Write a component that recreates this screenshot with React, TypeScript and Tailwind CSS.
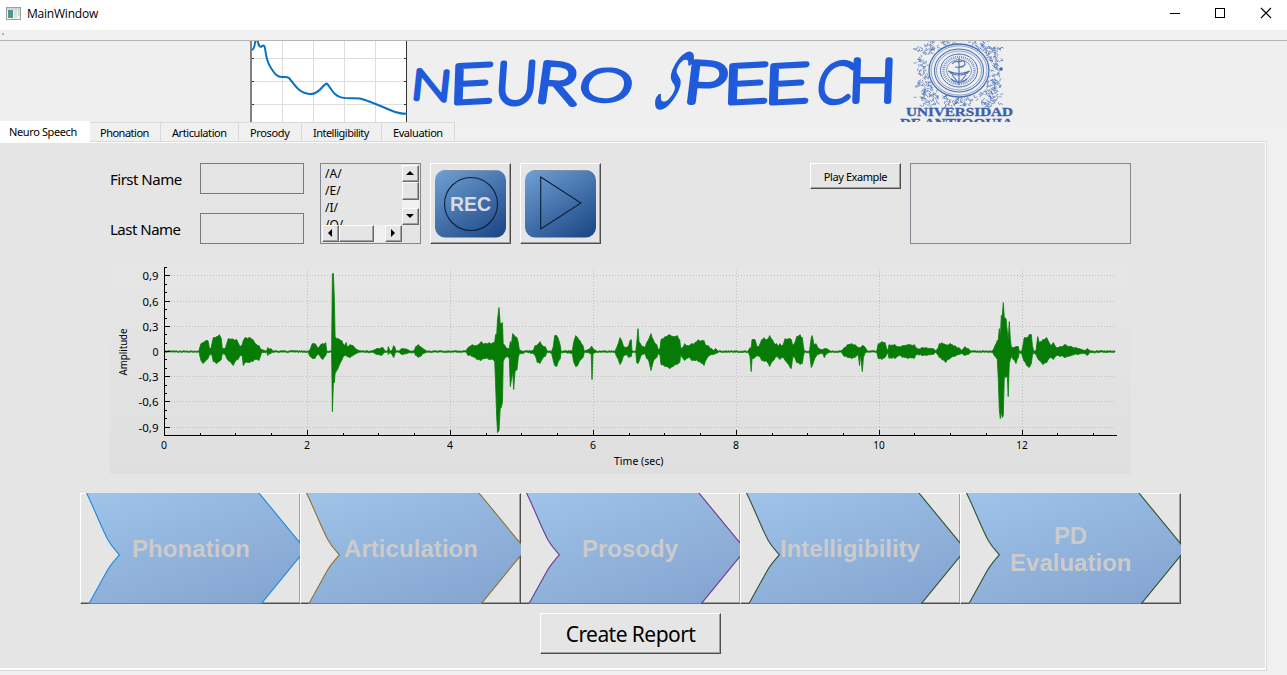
import React from "react";

const UI = "font-['Noto_Sans',sans-serif]";

/* [x, above, below] envelope of the recording, in pixels around the zero line */
const ENVELOPE: number[][] = [
  [55, 0.5, 0.5], [89, 0.5, 0.5], [90, 5, 5], [91, 8, 9], [93, 9, 12], [96, 11, 9], [98, 11, 7], [99.5, 3, 3], [101, 3, 3], [102, 8, 4], [103.3, 14, 10], [106.7, 15, 12], [109.3, 17, 10], [111.3, 13, 8], [112.3, 3, 2], [115.3, 3, 3], [116.7, 8, 7], [118.3, 13, 9], [123.3, 12.5, 14], [126.7, 12, 8], [128, 9, 8], [130, 5, 4], [132.3, 7, 5], [133.3, 11, 14], [135, 14, 11], [140, 14, 11], [143, 12, 10], [146.7, 7, 8], [149, 6, 9], [151.7, 2, 1], [156.7, 0.6, 0.6], [157.7, 4, 4], [161, 3, 1.5], [163, 0.6, 0.6],
  [198.3, 0.6, 0.6], [200, 2, 5], [202.3, 8, 7], [205, 8, 7], [208.3, 4, 3], [210.7, 7, 6], [212.7, 8, 8], [215.7, 9, 4], [216.7, 0.6, 0.6], [221.6, 0.6, 0.6], [222.4, 78, 60], [223.4, 78, 31], [224.4, 51, 31], [225.1, 15, 22], [228, 13, 17], [231.7, 11, 9], [234.3, 6, 4], [236.3, 9, 4], [237, 5, 5], [240, 7, 6], [243, 6, 4], [247, 2, 1.5], [250, 0.6, 0.6],
  [263, 0.8, 0.8], [266.7, 3, 3], [271.7, 4, 4], [273, 4, 2], [275, 0.6, 0.6], [277.7, 0.6, 0.6], [278.3, 5, 3], [280, 0.6, 0.6], [282, 1, 3], [283.7, 6, 6], [285, 4, 2], [286, 0.6, 0.6], [289, 0.6, 0.6], [291.7, 3, 3], [296.7, 2.5, 2], [300, 0.8, 0.8], [304.3, 1, 1], [305.7, 5, 4], [308.3, 7, 6], [310.7, 5, 5], [313, 3, 2], [316.7, 0.6, 0.6],
  [356, 0.6, 0.6], [358, 4, 4], [362, 7, 5], [366.7, 6, 8], [371, 10, 9], [375, 8, 7], [379, 9, 8], [383, 9, 8], [384.7, 9, 10], [385.5, 17, 30], [386.7, 17, 65], [387.5, 32, 81], [389, 44, 79], [390.2, 28, 57], [391.3, 28, 56], [392.5, 29, 50], [393.2, 8, 10], [395, 6, 6], [397.7, 3, 5], [399.3, 3, 7], [400.3, 10, 35], [401.5, 8, 28], [402.7, 18, 20], [403.7, 17, 38], [405, 15, 20], [407, 14, 18], [408.3, 9, 6], [409.3, 2, 2], [411.7, 0.6, 2], [416, 0.6, 0.6],
  [423.3, 1, 2], [425, 6, 4], [427.3, 7, 11], [430, 10, 12], [432.7, 6, 7], [435.3, 5, 5], [437, 0.6, 0.6], [441.7, 0.6, 1.5], [443.3, 5, 9], [444.7, 16, 14], [446.7, 16, 15], [448.3, 13, 10], [450.3, 6, 7], [451, 0.6, 0.6], [462.3, 0.6, 2], [463.6, 9, 10], [465.7, 16, 15], [467.7, 14, 14], [470, 11, 9], [473, 6, 6], [474.3, 0.6, 0.6], [478.3, 2, 1], [480, 3, 2], [481.2, 5, 2], [482, 5, 28], [483, 3, 2], [486, 0.6, 0.6],
  [505, 0.6, 0.6], [506.7, 4, 5], [508.3, 8, 8], [510, 14, 13], [511.7, 11, 10], [513.3, 6, 5], [516.7, 4, 3], [518.7, 6, 6], [520, 11, 5], [521.3, 12, 5], [522, 0.6, 0.6], [525.8, 0.6, 0.6], [526.7, 8, 11], [528, 23, 12], [529, 10, 10], [531, 7, 4], [535, 4, 2], [536.7, 9, 7], [539, 13, 10], [541, 18, 19], [543.3, 12, 10], [546.7, 7, 6], [548.3, 2, 2], [550, 3, 4], [551, 12, 13], [555, 15, 15], [559.3, 17, 17], [563.3, 15, 15], [567.3, 16, 13], [569.7, 12, 11], [570.7, 3, 3], [572.3, 4, 6], [574.7, 8, 9], [578.3, 6, 6], [581.7, 8, 9], [585, 9, 9], [588.3, 12, 10], [591.7, 11, 12], [594, 11, 14], [595.3, 7, 10], [598.3, 6, 5], [601.7, 3, 3], [603.3, 1, 3], [605.7, 3, 2], [608.3, 0.6, 0.6],
  [638.3, 0.6, 0.6], [640, 4, 5], [641.2, 3, 20], [642, 12, 8], [643, 12, 7], [645, 12, 6], [647, 5, 4], [649.3, 6, 5], [651.7, 12, 9], [654, 14, 10], [656.7, 12, 10], [659.7, 16, 15], [662.3, 12, 10], [664.3, 8, 8], [666.7, 8, 5], [668.3, 5, 6], [670, 8, 8], [672.7, 6, 6], [675, 13, 9], [680, 13, 16], [681.3, 12, 17], [682.7, 6, 6], [684.3, 8, 5], [686.7, 15, 11], [690, 17, 13], [692.3, 14, 12], [693.3, 6, 5], [694.3, 0.6, 0.6], [699.5, 0.6, 1], [701.3, 14, 16], [702.3, 16, 14], [703.7, 8, 10], [706, 8, 5], [707.7, 4, 3], [710.7, 2, 2], [713, 2, 2], [714.3, 3, 6], [716.7, 3, 2], [720, 0.6, 0.6],
  [731.3, 0.6, 0.6], [734.3, 4, 5], [737.7, 7, 6], [741.7, 8, 7], [745, 7, 6], [748.3, 4, 3], [749.5, 4, 14], [750.5, 4, 3], [752.3, 6, 20], [753.4, 6, 6], [755.3, 4, 1], [757.3, 0.6, 0.6], [766.7, 0.6, 0.6], [768.3, 8, 7], [771.7, 10, 8], [775, 9, 6], [776.7, 3, 3], [778, 1, 1], [779, 7, 7], [785, 7, 7], [789, 5, 4], [792.7, 6, 6], [798.3, 7, 7], [804.3, 7, 7], [806.7, 3, 3], [811.7, 4, 4], [816.7, 4, 4], [823.3, 3, 3], [825.7, 0.6, 0.6], [828.3, 4, 4], [829.3, 8, 6], [831.7, 9, 8], [835.7, 7, 11], [840, 8, 7], [845, 6, 5], [849, 4, 3], [851.7, 1, 2], [855, 5, 4], [858.3, 3, 3], [860.7, 0.6, 0.6],
  [882.3, 0.6, 0.6], [885, 6, 5], [887.3, 11, 8], [888.3, 12, 28], [889.3, 23, 58], [890.3, 14, 67], [891.3, 36, 60], [892.3, 36, 66], [893.3, 49, 64], [894.3, 34, 25], [896, 33, 26], [897.3, 20, 24], [898.2, 12, 45], [899.3, 30, 12], [900.3, 13, 8], [901.4, 4, 5], [903.3, 4, 8], [906, 5, 12], [908.3, 5, 6], [909.3, 0.6, 0.6], [911.7, 0.6, 2], [912.7, 5, 6], [914.3, 14, 10], [916.7, 14, 14], [919.3, 17, 16], [921.3, 17, 12], [922.4, 6, 4], [923.7, 0.6, 0.6], [926, 1, 3], [927.7, 15, 7], [929.3, 9, 9], [932.7, 12, 13], [936.7, 14, 11], [940.7, 6, 6], [943.3, 9, 8], [946.7, 4, 4], [950, 5, 5], [955, 7, 6], [961.7, 5, 4], [966.7, 4, 3], [971.7, 2, 2], [975, 1, 2], [977.3, 3, 4], [980, 0.8, 0.8], [1006, 0.6, 0.6],
];

function rand(n: number) {
  const v = Math.sin(n * 12.9898) * 43758.5453;
  return v - Math.floor(v);
}

const WAVE = (() => {
  const zero = 84.6;
  const up: string[] = [];
  const down: string[] = [];
  for (let i = 0; i < ENVELOPE.length - 1; i++) {
    const [x0, u0, d0] = ENVELOPE[i];
    const [x1, u1, d1] = ENVELOPE[i + 1];
    const steps = Math.max(1, Math.floor((x1 - x0) / 1.1));
    for (let s = 0; s < steps; s++) {
      const t = s / steps;
      const x = x0 + (x1 - x0) * t;
      const u = u0 + (u1 - u0) * t;
      const d = d0 + (d1 - d0) * t;
      const ju = u > 3 && s > 0 ? -rand(x) * 1.2 : u < 1 ? (rand(x) - 0.5) * 0.9 : 0;
      const jd = d > 3 && s > 0 ? -rand(x + 7) * 1.2 : u < 1 ? -ju : 0;
      up.push(`${x.toFixed(2)},${(zero - u - ju).toFixed(2)}`);
      down.unshift(`${x.toFixed(2)},${(zero + d + jd).toFixed(2)}`);
    }
  }
  return up.concat(down).join(" ");
})();

const Y_TICKS: [string, number][] = [["0,9", 8.5], ["0,6", 34.5], ["0,3", 59.5], ["0", 84.5], ["-0,3", 109.5], ["-0,6", 134.5], ["-0,9", 160.5]];
const Y_WIDTH = [16, 16, 16, 6, 20, 20, 20];
const X_TICKS: [string, number][] = [["0", 54.5], ["2", 197.5], ["4", 340.5], ["6", 483.5], ["8", 626.5], ["10", 769.5], ["12", 912.5]];
const X_MINOR = [90.5, 125.5, 161.5, 233.5, 268.5, 304.5, 376.5, 411.5, 447.5, 519.5, 554.5, 590.5, 662.5, 697.5, 733.5, 804.5, 840.5, 876.5, 947.5, 983.5];
const Y_MINOR = [0.5, 17.5, 25.5, 42.5, 51.5, 67.5, 76.5, 92.5, 101.5, 118.5, 126.5, 143.5, 151.5];

function WaveChart() {
  return (
    <svg width="1021" height="207" viewBox="0 0 1021 207" className={`block bg-linear-to-b from-[#e6e6e6] to-[#dfdfdf] ${UI}`}>
      <g stroke="#c0c0c0" strokeDasharray="1 2" shapeRendering="crispEdges">
        {Y_TICKS.map(([l, y]) => l !== "0" && <path key={l} d={`M55 ${y}H1006`} />)}
        {X_TICKS.slice(1).map(([l, x]) => <path key={l} d={`M${x} 3V168`} />)}
      </g>
      <polygon points={WAVE} fill="#067c06" stroke="#067c06" strokeWidth="0.8" />
      <g stroke="#000" shapeRendering="crispEdges">
        <path d="M54.5 0V169M54 168.5H1007" />
        {Y_TICKS.map(([l, y]) => <path key={l} d={`M55 ${y}h5`} />)}
        {Y_MINOR.map((y) => <path key={y} d={`M55 ${y}h2`} />)}
        {X_TICKS.slice(1).map(([l, x]) => <path key={l} d={`M${x} 168v-5`} />)}
        {X_MINOR.map((x) => <path key={x} d={`M${x} 168v-2`} />)}
      </g>
      <g fontSize="11" fill="#000">
        {Y_TICKS.map(([l, y], i) => (
          <text key={l} x={48.5 - Y_WIDTH[i]} y={y + 4} textLength={Y_WIDTH[i]} lengthAdjust="spacingAndGlyphs">{l}</text>
        ))}
        {X_TICKS.map(([l, x]) => (
          <text key={l} x={x - 0.5} y="182" textAnchor="middle" textLength={l.length > 1 ? 11.5 : 6} lengthAdjust="spacingAndGlyphs">{l}</text>
        ))}
        <text x="504" y="198" textLength="49.500" lengthAdjust="spacingAndGlyphs">Time (sec)</text>
        <text transform="translate(16.5 108.5) rotate(-90)" textLength="47" lengthAdjust="spacingAndGlyphs">Amplitude</text>
      </g>
    </svg>
  );
}

/* letter, left, top, right, bottom, tilt, slant */
const WORDMARK: [string, number, number, number, number, number, number][] = [
  ["N", 414, 67, 450, 103, 3, -3], ["E", 455, 61, 493, 105, -3, -5], ["U", 498, 59, 535, 106, -2, -6], ["R", 541, 60, 582, 106, 5, -3], ["O", 581, 66, 632, 104, 6, -12],
  ["S", 665, 49, 686, 111, 14, -14], ["P", 690, 59, 729, 106, 3, -4], ["E", 729, 61, 768, 105, -3, -5], ["E", 770, 61, 809, 105, -3, -5], ["C", 818, 59, 853, 105, 0, -12], ["H", 853, 56, 893, 104, 0, -2],
];
const ADVANCE: Record<string, [number, number]> = { N: [0.1, 0.56], E: [0.11, 0.43], U: [0.09, 0.54], R: [0.11, 0.5], O: [0.05, 0.68], S: [0.05, 0.45], P: [0.11, 0.44], C: [0.05, 0.57], H: [0.11, 0.54] };

function Wordmark() {
  return (
    <svg width="493" height="81" viewBox="407 41 493 81" className="block shrink-0 font-['Lato',sans-serif] font-thin">
      {WORDMARK.map(([ch, l, t, r, b, tilt, slant], i) => {
        const [lead, ink] = ADVANCE[ch];
        const pen = 6;
        const sx = (r - l - pen) / (ink * 50);
        const sy = (b - t - pen) / 36;
        return (
          <text
            key={i}
            fontSize="50"
            fill="#1f5adb"
            stroke="#1f5adb"
            strokeWidth="5.200"
            strokeLinejoin="round"
            strokeLinecap="round"
            transform={`translate(${(l + r) / 2} ${(t + b) / 2}) rotate(${tilt}) skewX(${slant}) translate(${pen / 2 - (r - l) / 2 - lead * 50 * sx} ${(b - t) / 2 - pen / 2}) scale(${sx} ${sy})`}
          >
            {ch}
          </text>
        );
      })}
    </svg>
  );
}

function Spectrum() {
  return (
    <svg width="157" height="81" viewBox="0 0 157 81" className="block shrink-0 bg-white">
      <path d="M32.5 0V81M63.5 0V81M94.5 0V81M125.5 0V81M0 17.5H157M0 40.5H157M0 63.5H157" stroke="#dedede" fill="none" />
      <path d="M1 0V81" stroke="#808080" strokeWidth="2" />
      <path d="M156.5 0V81" stroke="#333" />
      <path d="M2 17.5h2M2 40.5h2M2 63.5h2M154 17.5h2M154 40.5h2M154 63.5h2" stroke="#333" />
      <path d="M2 9C4 8 4.500 6 5 2L6 -2L7.500 -1C8.500 4 9 6 11 5.800C13 5 14 3 15 7C16 13 16 20 21 27C25 33 27 36 32 36C35 36 37 35.500 39 37C45 44 49 53 61 53C70 53 72 44 76.500 42.500C80 44 82 56 95 57C102 57.300 106 57 110 57.500C122 61 128 64 140 69C146 71.500 150 73 157 72.800" fill="none" stroke="#0a72bd" strokeWidth="2" />
    </svg>
  );
}

const FOLIAGE = (() => {
  const out: string[] = [];
  for (let i = 0; i < 1100; i++) {
    const x = 16 + rand(i + 1) * 86;
    const y = -1 + rand(i + 2001) * 66;
    const dx = (x - 59) / 32;
    const dy = (y - 29.5) / 28.5;
    if (dx * dx + dy * dy < 1) continue;
    if (y < 4 && (x < 28 || x > 88)) continue;
    if (y > 58 && (Math.abs(x - 41) < 4 || Math.abs(x - 77) < 4)) continue;
    const edge = 3 + 3 * Math.sin(y * 0.55);
    if (x < 15 + edge || x > 103 - edge) continue;
    const d = rand(i + 4001) * 6.28;
    const c = Math.cos(d) * 2.2;
    const s = Math.sin(d) * 2.2;
    out.push(`M${x.toFixed(1)} ${y.toFixed(1)}q${c.toFixed(1)} ${s.toFixed(1)} ${(c - s).toFixed(1)} ${(s + c).toFixed(1)}`);
  }
  return out.join("");
})();

function Crest() {
  return (
    <svg width="120" height="81" viewBox="0 0 120 81" className="block shrink-0 font-['Liberation_Serif',serif] font-bold">
      <g fill="none" stroke="#4a70b8">
        <path d={FOLIAGE} strokeWidth="0.8" opacity="0.85" />
        <ellipse cx="59" cy="29.500" rx="30" ry="26.500" fill="#efefef" strokeWidth="1.300" />
        <ellipse cx="59" cy="29.500" rx="28" ry="24.700" strokeWidth="0.600" />
        <ellipse cx="59" cy="29.500" rx="24.500" ry="21.500" strokeWidth="1.100" />
        <ellipse cx="59" cy="29.500" rx="22.500" ry="19.500" strokeWidth="0.600" />
        <ellipse cx="59" cy="29.500" rx="18.500" ry="16.500" strokeWidth="1" />
        <ellipse cx="59" cy="29.500" rx="15.500" ry="13.500" strokeWidth="2.500" strokeDasharray="1 1" opacity="0.7" />
        <ellipse cx="59" cy="29.500" rx="12.500" ry="11" strokeWidth="0.700" />
        <path d="M59 17V44M52 23q3 -4 7 -2q6 -3 6 2q-1 4 -10 3M48 30q11 5 22 0M49 30q2 4 10 4t10 -4M52 34l5 6M66 34l-5 6M51 38q4 4 8 3q4 1 8 -3" strokeWidth="1.100" />
      </g>
      <circle cx="101" cy="28" r="1.800" fill="#3d63ad" />
      <g fill="#3a60aa" stroke="#3a60aa" strokeWidth="0.300" fontSize="11.500">
        <text x="6" y="75" textLength="107" lengthAdjust="spacingAndGlyphs">UNIVERSIDAD</text>
        <text x="0" y="86" textLength="113" lengthAdjust="spacingAndGlyphs">DE ANTIOQUIA</text>
      </g>
    </svg>
  );
}

const RAISED = "border border-t-white border-l-white border-r-[#4d4d4d] border-b-[#4d4d4d] shadow-[inset_-1px_-1px_0_#a0a0a0] bg-[#e5e5e5]";
const KNOB = "flex items-center justify-center shrink-0 border border-t-white border-l-white border-r-[#696969] border-b-[#696969] shadow-[inset_-1px_-1px_0_#a0a0a0] bg-[#e5e5e5] pr-[2px] pb-px";

type Arrow = { lines: [string, number, number, number][]; stroke: string; top?: boolean };
const ARROWS: Arrow[] = [
  { lines: [["Phonation", 52, 118, 64]], stroke: "#1c8bdc" },
  { lines: [["Articulation", 44, 134, 64]], stroke: "#8a7434", top: true },
  { lines: [["Prosody", 62, 96, 64]], stroke: "#6b3a92" },
  { lines: [["Intelligibility", 40, 140, 64]], stroke: "#2f5133" },
  { lines: [["PD", 94, 33, 51], ["Evaluation", 50, 121.5, 78]], stroke: "#2f5133", top: true },
];

function ArrowButton({ lines, stroke, top }: Arrow) {
  return (
    <button className={`-mr-px h-[111px] w-[221px] shrink-0 ${RAISED} ${top ? "relative z-10" : ""}`}>
      <svg width="221" height="111" viewBox="0 0 221 111" className="-mt-px -ml-px block font-['Liberation_Sans',sans-serif] font-bold">
        <defs>
          <linearGradient id="arrowFill" x1="0.1" y1="0" x2="0.75" y2="1">
            <stop offset="0" stopColor="#9fc3e9" />
            <stop offset="1" stopColor="#84a5d0" />
          </linearGradient>
        </defs>
        <path d="M4 -5C13 12 20 32 28 47C32 54 36 58 39.300 61.800C35 67 31 71 27 78L6 116H177L225.500 56.500L174 -6Z" fill="url(#arrowFill)" stroke={stroke} strokeWidth="1.100" />
        <path d="M9 110.500H181" stroke="#6684aa" />
        {lines.map(([text, x, width, y]) => (
          <text key={text} x={x} y={y} fontSize="24" fill="#cbcbcb" textLength={width} lengthAdjust="spacing">{text}</text>
        ))}
      </svg>
    </button>
  );
}

function MediaButton({ children }: { children: React.ReactNode }) {
  return (
    <button className={`h-[81px] w-[81px] ${RAISED}`}>
      <svg width="79" height="79" viewBox="1 1 79 79" className="block font-['Liberation_Sans',sans-serif] font-bold">
        <defs>
          <linearGradient id="mediaFill" x1="0.1" y1="0" x2="0.8" y2="1">
            <stop offset="0" stopColor="#6d9dd1" />
            <stop offset="1" stopColor="#204b89" />
          </linearGradient>
        </defs>
        <rect x="5" y="7" width="71" height="67.500" rx="10" fill="url(#mediaFill)" />
        <path d="M13 7.500H68" stroke="#8593a5" />
        {children}
      </svg>
    </button>
  );
}

const TABS: [string, string, string][] = [
  ["Phonation", "w-[71px] pl-[10px]", "tracking-[-0.5px]"],
  ["Articulation", "w-[78px] pl-[11px]", "tracking-[-0.42px]"],
  ["Prosody", "w-[63px] pl-[11px]", "tracking-[-0.35px]"],
  ["Intelligibility", "w-[80px] pl-[11px]", "tracking-[-0.52px]"],
  ["Evaluation", "w-[73px] pl-[11px]", "tracking-[-0.42px]"],
];

export default function App() {
  return (
    <div className={`flex h-[675px] w-[1287px] flex-col overflow-hidden bg-[#f0f0f0] whitespace-nowrap text-black ${UI}`}>
      <header className="flex h-[30px] shrink-0 items-center bg-white pl-[6px]">
        <svg width="15" height="13" viewBox="0 0 15 13" className="-mt-[4px] block">
          <rect x="0.500" y="0.500" width="14" height="12" fill="#f4f4f4" stroke="#9a9fa3" />
          <rect x="1" y="1" width="13" height="2" fill="#d0d5d8" />
          <rect x="2" y="3" width="5" height="8" fill="#4a94a0" />
          <rect x="2" y="7" width="5" height="4" fill="#4f9d78" />
          <rect x="8" y="3" width="3" height="8" fill="#dedede" />
          <rect x="12" y="3" width="1.500" height="6" fill="#b8dcc8" />
        </svg>
        <span className="-mt-[3px] ml-[6px] grow font-['Open_Sans',sans-serif] text-[12px] leading-4 tracking-[-0.22px]">MainWindow</span>
        <svg width="117" height="30" viewBox="1170 0 117 30" className="block" fill="none" stroke="#000">
          <path d="M1170 13.500h10M1215.500 8.500h9v9h-9z" shapeRendering="crispEdges" />
          <path d="M1261 8l10 10M1271 8l-10 10" strokeWidth="1.100" />
        </svg>
      </header>
      <div className="flex h-[11px] shrink-0 border-b border-[#b5b5b5] pt-[3px] pl-[2px]">
        <div className="h-[2px] w-[2px] bg-[#b0b0b0]" />
      </div>
      <div className="flex h-[81px] shrink-0 bg-[#efefef] pl-[250px]">
        <Spectrum />
        <Wordmark />
        <Crest />
      </div>
      <nav className="z-10 -mt-px flex h-[20px] shrink-0 items-end text-[11px] leading-[14px]">
        <div className="relative z-10 -mb-px flex h-[21px] w-[90px] items-center bg-white pl-[9px]">
          <span className="tracking-[-0.38px]">Neuro Speech</span>
        </div>
        {TABS.map(([label, box, spacing]) => (
          <div key={label} className={`flex h-[19px] items-center border-t border-r border-[#d9d9d9] bg-[#f0f0f0] pt-[2px] ${box}`}>
            <span className={spacing}>{label}</span>
          </div>
        ))}
      </nav>
      <main className="flex h-[530px] w-[1267px] shrink-0 flex-col border-t border-r border-b border-[#d9d9d9]">
        <div className="flex grow flex-col border-t border-r border-b-2 border-white bg-[#e5e5e5] pt-[20px] pl-[80px]">
          <section className="flex h-[81px] shrink-0 pl-[30px] text-[15px]">
            <div className="flex w-[90px] flex-col gap-[19px] tracking-[-0.5px]">
              <label className="flex h-[31px] items-center pt-[2px]">First Name</label>
              <label className="flex h-[31px] items-center pt-[2px]">Last Name</label>
            </div>
            <div className="flex w-[104px] flex-col gap-[19px]">
              <div className="h-[31px] border border-[#7a7a7a]" />
              <div className="h-[31px] border border-[#7a7a7a]" />
            </div>
            <div className="ml-[16px] flex h-[81px] w-[101px] flex-col border border-[#828790] p-px">
              <div className="flex h-[60px]">
                <ul className="h-[60px] w-[80px] overflow-hidden pl-[3px] text-[12px] leading-[17px]">
                  <li>/A/</li>
                  <li>/E/</li>
                  <li>/I/</li>
                  <li>/O/</li>
                </ul>
                <div className="flex w-[17px] flex-col bg-[#f0f0f0]">
                  <div className={`h-[17px] ${KNOB}`}><svg width="8" height="4" viewBox="0 0 8 4"><path d="M4 0L8 4H0z" /></svg></div>
                  <div className={`h-[18px] ${KNOB}`} />
                  <div className="grow" />
                  <div className={`h-[17px] ${KNOB}`}><svg width="8" height="4" viewBox="0 0 8 4"><path d="M4 4L8 0H0z" /></svg></div>
                </div>
              </div>
              <div className="flex h-[17px] w-[80px] bg-[#f0f0f0]">
                <div className={`w-[17px] ${KNOB}`}><svg width="4" height="8" viewBox="0 0 4 8"><path d="M0 4L4 0V8z" /></svg></div>
                <div className={`w-[35px] ${KNOB}`} />
                <div className="grow" />
                <div className={`w-[17px] ${KNOB}`}><svg width="4" height="8" viewBox="0 0 4 8"><path d="M4 4L0 0V8z" /></svg></div>
              </div>
            </div>
            <div className="ml-[9px] flex gap-[9px]">
              <MediaButton>
                <circle cx="41" cy="41" r="26.500" fill="none" stroke="#0f1f38" strokeWidth="1.100" />
                <text x="20" y="47.500" fontSize="20" fill="#d9dce2" textLength="41" lengthAdjust="spacingAndGlyphs">REC</text>
              </MediaButton>
              <MediaButton>
                <path d="M20.700 14L61 40L20.700 66Z" fill="none" stroke="#0f1f38" strokeWidth="1.100" />
              </MediaButton>
            </div>
            <button className={`ml-[209px] h-[26px] w-[91px] pt-px text-[11px] leading-[14px] tracking-[-0.42px] ${RAISED}`}>Play Example</button>
            <div className="ml-[9px] h-[81px] w-[221px] border border-[#828790]" />
          </section>
          <section className="mt-[23px] shrink-0 pl-[30px]">
            <WaveChart />
          </section>
          <section className="mt-[19px] flex shrink-0">
            {ARROWS.map((arrow, i) => <ArrowButton key={i} {...arrow} />)}
          </section>
          <button className={`mt-[9px] ml-[460px] h-[41px] w-[181px] shrink-0 pt-px text-[21px] leading-7 tracking-[-0.55px] ${RAISED}`}>Create Report</button>
        </div>
      </main>
    </div>
  );
}
